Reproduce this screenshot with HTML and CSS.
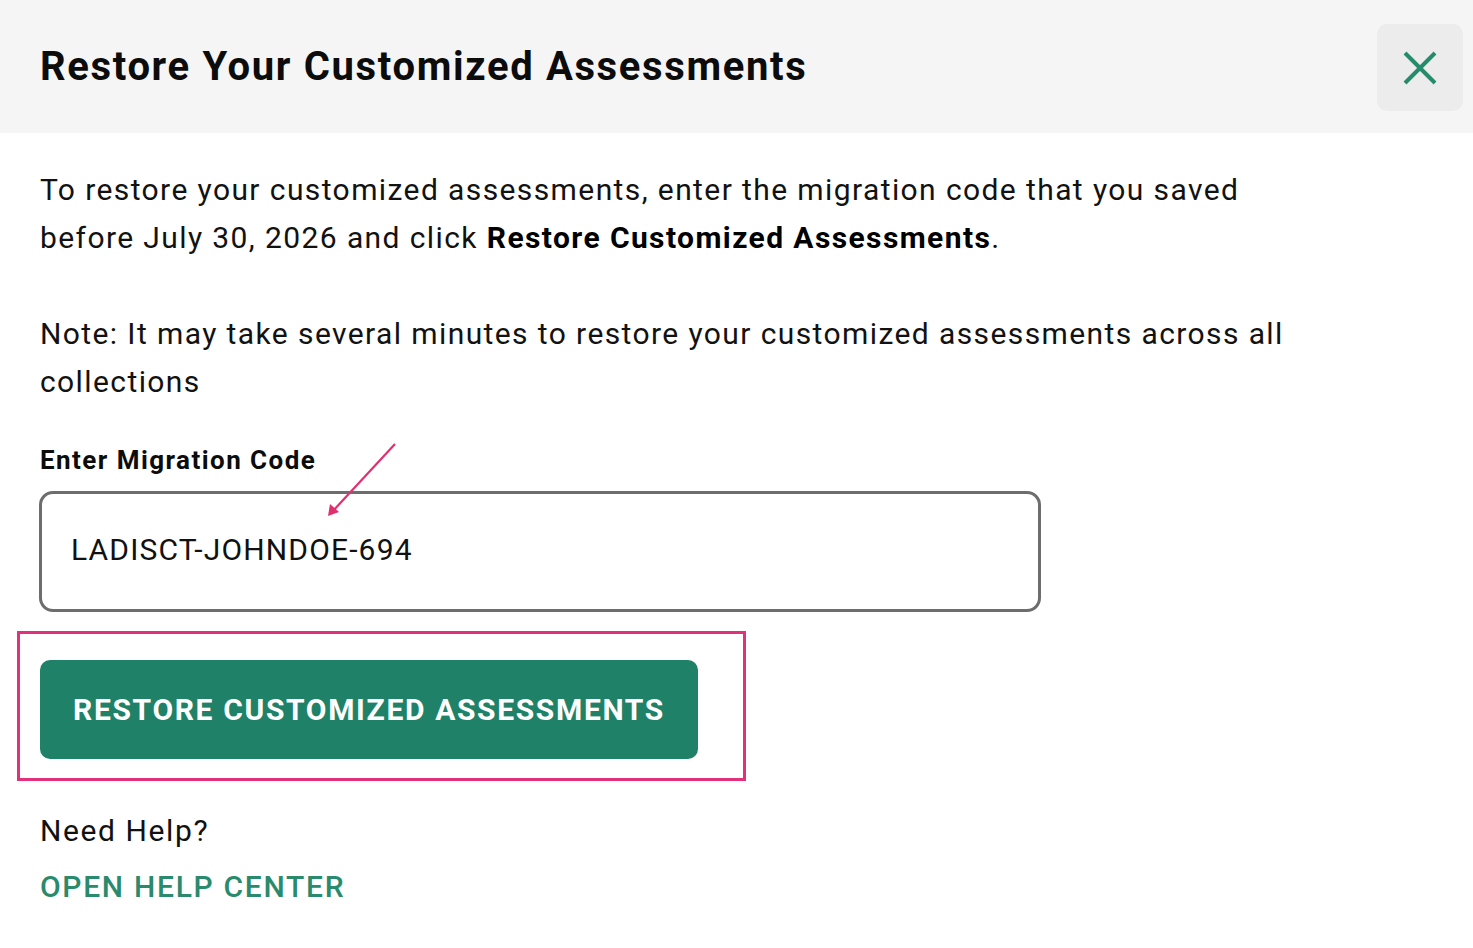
FILE: index.html
```html
<!DOCTYPE html>
<html lang="en">
<head>
<meta charset="utf-8">
<title>Restore Your Customized Assessments</title>
<link rel="stylesheet" href="styles.css">
</head>
<body>
<div class="dialog">
  <header class="dialog-header">
    <h1 class="dialog-title">Restore Your Customized Assessments</h1>
    <button class="close-btn" aria-label="Close">
      <svg width="36" height="36" viewBox="0 0 36 36" aria-hidden="true">
        <path d="M3 3 L33 33 M33 3 L3 33" stroke="#268a6c" stroke-width="4" stroke-linecap="butt" fill="none"/>
      </svg>
    </button>
  </header>
  <main class="dialog-body">
    <p class="para">To restore your customized assessments, enter the migration code that you saved before July 30, 2026 and click <strong>Restore Customized Assessments</strong>.</p>
    <p class="para note">Note: It may take several minutes to restore your customized assessments across all collections</p>
    <div class="field">
      <label class="field-label" for="code">Enter Migration Code</label>
      <input class="field-input" id="code" type="text" value="LADISCT-JOHNDOE-694">
      <svg class="annot-arrow" width="80" height="80" viewBox="0 0 80 80" aria-hidden="true">
        <path d="M75 3 L12 71" stroke="#e0306f" stroke-width="2.2" fill="none"/>
        <path d="M8 75 L10 63 L19 71 Z" fill="#e0306f"/>
      </svg>
    </div>
    <div class="action">
      <button class="primary-btn">RESTORE CUSTOMIZED ASSESSMENTS</button>
      <div class="annot-box"></div>
    </div>
    <p class="help-q">Need Help?</p>
    <a class="help-link" href="#">OPEN HELP CENTER</a>
  </main>
</div>
</body>
</html>
```

FILE: styles.css
```css
* { box-sizing: border-box; }
html, body { margin: 0; padding: 0; background: #ffffff; }
body {
  font-family: Roboto, "Liberation Sans", Arial, sans-serif;
  color: #111111;
  width: 1473px;
  height: 948px;
  overflow: hidden;
}
.dialog-header {
  height: 133px;
  background: #f5f5f5;
  display: flex;
  align-items: center;
  justify-content: space-between;
  padding: 0 10px 0 40px;
}
.dialog-title {
  margin: 0;
  font-size: 40px;
  font-weight: 700;
  color: #0c0c0c;
  letter-spacing: 1.65px;
}
.close-btn {
  width: 86px;
  height: 87px;
  border: none;
  border-radius: 10px;
  background: #ececec;
  display: flex;
  align-items: center;
  justify-content: center;
  padding: 0;
  margin-top: 2px;
  cursor: pointer;
}
.dialog-body {
  padding: 33px 40px 0 40px;
}
.para {
  margin: 0;
  font-size: 30px;
  line-height: 48px;
  color: #121212;
  letter-spacing: 1.4px;
  max-width: 1265px;
}
.para strong { font-weight: 700; color: #000; }
.note { margin-top: 48px; }
.field {
  position: relative;
  margin-top: 38px;
  display: flex;
  flex-direction: column;
}
.field-label {
  font-size: 26px;
  line-height: 32px;
  font-weight: 700;
  color: #0c0c0c;
  letter-spacing: 1.45px;
}
.field-input {
  margin-top: 15px;
  margin-left: -1px;
  width: 1002px;
  height: 121px;
  border: 3px solid #6d6d6d;
  border-radius: 14px;
  padding: 0 0 4px 29px;
  font-family: Roboto, "Liberation Sans", Arial, sans-serif;
  font-size: 30px;
  letter-spacing: 1.15px;
  color: #111;
  background: #fff;
  outline: none;
}
.annot-arrow {
  position: absolute;
  left: 280px;
  top: -3px;
}
.action {
  position: relative;
  margin-top: 48px;
  display: flex;
}
.primary-btn {
  width: 658px;
  height: 99px;
  border: none;
  border-radius: 10px;
  background: #1f8268;
  color: #ffffff;
  font-family: Roboto, "Liberation Sans", Arial, sans-serif;
  font-size: 30px;
  font-weight: 700;
  letter-spacing: 1.65px;
  padding: 0;
  cursor: pointer;
}
.annot-box {
  position: absolute;
  left: -23px;
  top: -29px;
  width: 729px;
  height: 150px;
  border: 3px solid #e2307a;
  pointer-events: none;
}
.help-q {
  margin: 48px 0 0 0;
  font-size: 30px;
  line-height: 48px;
  color: #111;
  letter-spacing: 1.6px;
}
.help-link {
  display: inline-block;
  margin-top: 8px;
  font-size: 30px;
  line-height: 48px;
  font-weight: 500;
  color: #2a8a6c;
  text-decoration: none;
  letter-spacing: 1.7px;
}
```
